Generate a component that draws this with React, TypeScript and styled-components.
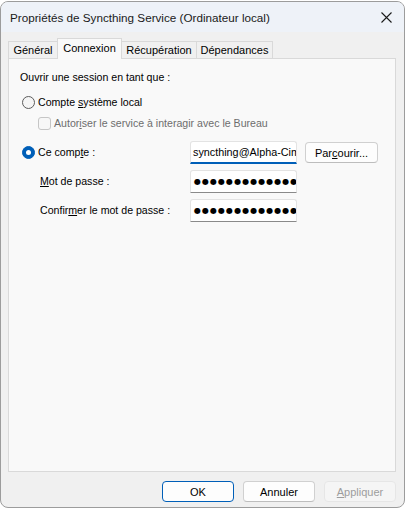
import React from "react";
import styled, { createGlobalStyle } from "styled-components";

const Global = createGlobalStyle`
  html, body { margin: 0; padding: 0; background: #ffffff; }
  * { box-sizing: border-box; }
`;

const Window = styled.div`
  margin-top: 1px;
  width: 405px;
  height: 507px;
  border: 1px solid #9c9c9c;
  border-radius: 8px;
  overflow: hidden;
  background: #f0f0f0;
  display: flex;
  flex-direction: column;
  font-family: "Liberation Sans", Arial, sans-serif;
  color: #000;
`;

const TitleBar = styled.div`
  height: 30px;
  flex: none;
  background: #eef2f8;
  display: flex;
  align-items: center;
  justify-content: space-between;
  padding: 0 12px 0 9px;
  font-size: 11.7px;
  color: #1a1a1a;
`;

const Body = styled.div`
  flex: 1;
  display: flex;
  flex-direction: column;
  padding: 6px 8px 0 7px;
`;

const TabRow = styled.div`
  display: flex;
  align-items: flex-end;
  height: 21px;
  margin-bottom: -1px;
  position: relative;
  z-index: 1;
`;

const Tab = styled.div<{ $w: number; $active?: boolean }>`
  width: ${(p) => p.$w}px;
  height: ${(p) => (p.$active ? 21 : 18)}px;
  border: 1px solid #d9d9d9;
  border-bottom: ${(p) => (p.$active ? "none" : "1px solid #d9d9d9")};
  margin-left: -1px;
  background: ${(p) => (p.$active ? "#f9f9f9" : "#f0f0f0")};
  font-size: 11px;
  display: flex;
  align-items: ${(p) => (p.$active ? "flex-start" : "center")};
  padding-top: ${(p) => (p.$active ? 3 : 0)}px;
  justify-content: center;
  &:first-child { margin-left: 0; }
`;

const Panel = styled.div`
  flex: 1;
  background: #f9f9f9;
  border: 1px solid #d9d9d9;
  padding: 12px 0 0 11px;
  font-size: 10.6px;
`;

const Heading = styled.div`
  line-height: 13px;
  height: 13px;
`;

const OptionRow = styled.div<{ $mt: number; $ml: number }>`
  display: flex;
  align-items: center;
  gap: 3px;
  height: 13px;
  line-height: 13px;
  margin-top: ${(p) => p.$mt}px;
  margin-left: ${(p) => p.$ml}px;
`;

const Radio = styled.span<{ $checked?: boolean }>`
  width: 13px;
  height: 13px;
  border-radius: 50%;
  flex: none;
  display: inline-flex;
  align-items: center;
  justify-content: center;
  background: ${(p) => (p.$checked ? "#005fb8" : "#f5f5f5")};
  border: 1px solid ${(p) => (p.$checked ? "#005fb8" : "#5c5c5c")};
  &::after {
    content: "";
    width: 5px;
    height: 5px;
    border-radius: 50%;
    background: ${(p) => (p.$checked ? "#ffffff" : "transparent")};
  }
`;

const CheckBox = styled.span`
  width: 13px;
  height: 13px;
  flex: none;
  border: 1px solid #c6c6c6;
  border-radius: 3px;
  background: #f7f7f7;
`;

const Muted = styled.span`
  color: #6d6d6d;
`;

const FieldGrid = styled.div`
  display: grid;
  grid-template-columns: 160px 107px 73px;
  column-gap: 8px;
  row-gap: 6px;
  align-items: center;
  margin-top: 11px;
  margin-left: 2px;
`;

const FieldLabel = styled.div<{ $indent?: number }>`
  display: flex;
  align-items: center;
  gap: 3px;
  padding-left: ${(p) => p.$indent ?? 0}px;
  line-height: 13px;
`;

const TextBox = styled.div<{ $focused?: boolean }>`
  height: 23px;
  background: #ffffff;
  border: 1px solid #e3e3e3;
  border-bottom: ${(p) => (p.$focused ? "2px solid #005fb8" : "1px solid #8a8a8a")};
  border-radius: 3px 3px 0 0;
  overflow: hidden;
  white-space: nowrap;
  display: flex;
  align-items: center;
  padding-left: 2px;
  font-size: 10.8px;
`;

const Caret = styled.span`
  display: inline-block;
  width: 1px;
  height: 14px;
  background: #000;
`;

const Dots = styled.span`
  font-family: "DejaVu Sans", sans-serif;
  font-size: 8px;
  letter-spacing: 1.05px;
  color: #000;
  padding-left: 1px;
`;

const Button = styled.div<{ $w: number; $primary?: boolean; $disabled?: boolean }>`
  width: ${(p) => p.$w}px;
  height: 21px;
  border-radius: 4px;
  display: flex;
  align-items: center;
  justify-content: center;
  font-size: 11px;
  background: ${(p) => (p.$disabled ? "#f5f5f5" : "#fdfdfd")};
  color: ${(p) => (p.$disabled ? "#9d9d9d" : "#000")};
  border: 1px solid
    ${(p) => (p.$primary ? "#005fb8" : p.$disabled ? "#e6e6e6" : "#d0d0d0")};
  ${(p) => (!p.$primary && !p.$disabled ? "border-bottom-color: #bdbdbd;" : "")}
`;

const Footer = styled.div`
  height: 35px;
  flex: none;
  display: flex;
  justify-content: flex-end;
  gap: 9px;
  padding-top: 9px;
`;

const U = styled.span`
  text-decoration: underline;
  text-underline-offset: 1px;
`;

const CloseIcon = () => (
  <svg width="11" height="11" viewBox="0 0 11 11" aria-hidden>
    <path d="M0.5 0.5 L10.5 10.5 M10.5 0.5 L0.5 10.5" stroke="#1a1a1a" strokeWidth="1.1" />
  </svg>
);

const dots = "●".repeat(17);

export default function App() {
  return (
    <>
      <Global />
      <Window>
        <TitleBar>
          <span>Propriétés de Syncthing Service (Ordinateur local)</span>
          <CloseIcon />
        </TitleBar>
        <Body>
          <TabRow>
            <Tab $w={50}>Général</Tab>
            <Tab $w={65} $active>
              Connexion
            </Tab>
            <Tab $w={76}>Récupération</Tab>
            <Tab $w={77}>Dépendances</Tab>
          </TabRow>
          <Panel>
            <Heading>Ouvrir une session en tant que :</Heading>
            <OptionRow $mt={12} $ml={2}>
              <Radio />
              <span>
                Compte <U>s</U>ystème local
              </span>
            </OptionRow>
            <OptionRow $mt={8} $ml={18}>
              <CheckBox />
              <Muted>
                Autor<U>i</U>ser le service à interagir avec le Bureau
              </Muted>
            </OptionRow>
            <FieldGrid>
              <FieldLabel>
                <Radio $checked />
                <span>
                  Ce comp<U>t</U>e :
                </span>
              </FieldLabel>
              <TextBox $focused>
                syncthing
                <Caret />
                @Alpha-Cimetière
              </TextBox>
              <Button $w={73}>
                Par<U>c</U>ourir...
              </Button>
              <FieldLabel $indent={18}>
                <span>
                  <U>M</U>ot de passe :
                </span>
              </FieldLabel>
              <TextBox>
                <Dots>{dots}</Dots>
              </TextBox>
              <span />
              <FieldLabel $indent={18}>
                <span>
                  Confir<U>m</U>er le mot de passe :
                </span>
              </FieldLabel>
              <TextBox>
                <Dots>{dots}</Dots>
              </TextBox>
              <span />
            </FieldGrid>
          </Panel>
          <Footer>
            <Button $w={72} $primary>
              OK
            </Button>
            <Button $w={72}>Annuler</Button>
            <Button $w={72} $disabled>
              <U>A</U>ppliquer
            </Button>
          </Footer>
        </Body>
      </Window>
    </>
  );
}
